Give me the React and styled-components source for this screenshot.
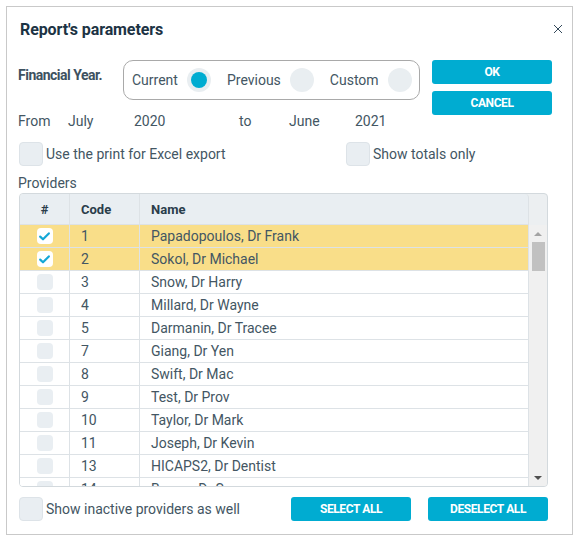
import React from "react";
import styled, { createGlobalStyle } from "styled-components";

const GlobalStyle = createGlobalStyle`
  html, body {
    margin: 0;
    padding: 0;
    background: #ffffff;
  }
  body {
    font-family: Roboto, "Liberation Sans", sans-serif;
    color: #435663;
  }
`;

const Dialog = styled.div`
  margin: 6px 0 0 6px;
  width: 567px;
  height: 529px;
  box-sizing: border-box;
  border: 1px solid #c9c9c9;
  background: #fff;
  padding: 0 20px 0 11px;
  display: flex;
  flex-direction: column;
`;

const Header = styled.div`
  height: 44px;
  display: flex;
  align-items: center;
  justify-content: space-between;
  padding-left: 2px;
`;

const Title = styled.h1`
  margin: 0;
  font-size: 16px;
  font-weight: 700;
  color: #1c3344;
  letter-spacing: -0.1px;
`;

const Close = styled.button`
  border: none;
  background: none;
  padding: 0;
  margin-right: -14px;
  width: 16px;
  height: 16px;
  display: flex;
  align-items: center;
  justify-content: center;
  cursor: pointer;
`;

const TopSection = styled.div`
  margin-top: 9px;
  display: flex;
  justify-content: space-between;
`;

const LeftCol = styled.div`
  display: flex;
  flex-direction: column;
`;

const YearRow = styled.div`
  display: flex;
  align-items: flex-start;
`;

const YearLabel = styled.div`
  width: 105px;
  font-size: 14px;
  font-weight: 700;
  letter-spacing: -0.5px;
  color: #3d5160;
  padding-top: 7px;
`;

const RadioGroup = styled.div`
  width: 297px;
  height: 40px;
  box-sizing: border-box;
  border: 1px solid #a9a9a9;
  border-radius: 10px;
  display: flex;
  align-items: center;
  gap: 16px;
  padding: 0 9px 0 8px;
`;

const RadioOption = styled.label`
  display: flex;
  align-items: center;
  gap: 9px;
  font-size: 14px;
  color: #435663;
`;

const RadioCircle = styled.span`
  width: 24px;
  height: 24px;
  border-radius: 50%;
  background: #e9eef1;
  display: flex;
  align-items: center;
  justify-content: center;

  &::after {
    content: "";
    width: 16px;
    height: 16px;
    border-radius: 50%;
    background: ${(p) => (p.$checked ? "#00acd1" : "transparent")};
  }
`;

const FromRow = styled.div`
  margin-top: 12px;
  height: 18px;
  display: flex;
  align-items: center;
  font-size: 14px;
`;

const FromCell = styled.span`
  width: ${(p) => p.$w}px;
`;

const ButtonCol = styled.div`
  display: flex;
  flex-direction: column;
  gap: 7px;
`;

const Button = styled.button`
  width: 120px;
  height: 24px;
  border: none;
  border-radius: 3px;
  background: #00acd1;
  color: #fff;
  font-family: Roboto, "Liberation Sans", sans-serif;
  font-size: 12px;
  font-weight: 700;
  letter-spacing: -0.4px;
  cursor: pointer;
  padding: 0;
`;

const CheckRow = styled.div`
  margin-top: 12px;
  height: 24px;
  display: flex;
  align-items: center;
  padding-left: 1px;
`;

const CheckItem = styled.label`
  display: flex;
  align-items: center;
  gap: 3px;
  font-size: 14px;
  color: #435663;
  width: ${(p) => (p.$w ? `${p.$w}px` : "auto")};
`;

const BigBox = styled.span`
  width: 24px;
  height: 24px;
  box-sizing: border-box;
  border: 1px solid #dde3e8;
  border-radius: 4px;
  background: #e9eef2;
`;

const SectionLabel = styled.div`
  margin-top: 8px;
  height: 18px;
  display: flex;
  align-items: center;
  font-size: 14px;
`;

const Table = styled.div`
  margin: 1px 0 0 1px;
  width: 529px;
  height: 294px;
  box-sizing: border-box;
  border: 1px solid #d3d9dd;
  border-radius: 4px;
  display: flex;
  flex-direction: column;
  overflow: hidden;
  background: #eceff1;
`;

const HeadRow = styled.div`
  height: 30px;
  display: flex;
  background: #e9eef2;
  border-bottom: 1px solid #dde2e6;
  margin-right: 18px;
  border-right: 1px solid #dde2e6;
  border-top-right-radius: 4px;
`;

const HeadCell = styled.div`
  width: ${(p) => (p.$w ? `${p.$w}px` : "auto")};
  flex: ${(p) => (p.$w ? "none" : 1)};
  box-sizing: border-box;
  display: flex;
  align-items: center;
  justify-content: ${(p) => (p.$center ? "center" : "flex-start")};
  padding-left: ${(p) => (p.$center ? 0 : 11)}px;
  font-size: 13px;
  font-weight: 700;
  color: #2a3d4b;
  border-right: ${(p) => (p.$last ? "none" : "1px solid #dde2e6")};
`;

const BodyWrap = styled.div`
  flex: 1;
  display: flex;
  min-height: 0;
`;

const Rows = styled.div`
  flex: 1;
  overflow: hidden;
  background: #fff;
  border-right: 1px solid #dde2e6;
`;

const Row = styled.div`
  height: 22px;
  display: flex;
  border-bottom: 1px solid #dde2e6;
  background: ${(p) => (p.$selected ? "#f9de89" : "#fff")};
`;

const Cell = styled.div`
  width: ${(p) => (p.$w ? `${p.$w}px` : "auto")};
  flex: ${(p) => (p.$w ? "none" : 1)};
  box-sizing: border-box;
  display: flex;
  align-items: center;
  justify-content: ${(p) => (p.$center ? "center" : "flex-start")};
  padding-left: ${(p) => (p.$center ? 0 : 11)}px;
  font-size: 14px;
  color: #435663;
  border-right: ${(p) => (p.$last ? "none" : "1px solid #dde2e6")};
  white-space: nowrap;
`;

const SmallBox = styled.span`
  width: 16px;
  height: 16px;
  border-radius: 4px;
  background: ${(p) => (p.$checked ? "#ffffff" : "#e9eef2")};
  display: flex;
  align-items: center;
  justify-content: center;
`;

const ScrollBar = styled.div`
  width: 18px;
  background: #f0f0f0;
  display: flex;
  flex-direction: column;
  align-items: center;
`;

const Arrow = styled.div`
  height: 17px;
  width: 100%;
  display: flex;
  align-items: center;
  justify-content: center;
`;

const Track = styled.div`
  flex: 1;
  width: 100%;
  display: flex;
  justify-content: center;
`;

const Thumb = styled.div`
  width: 13px;
  height: 29px;
  background: #c1c1c1;
`;

const BottomRow = styled.div`
  margin-top: 10px;
  height: 24px;
  display: flex;
  align-items: center;
  padding-left: 1px;
`;

const BottomButtons = styled.div`
  margin-left: auto;
  margin-right: 4px;
  display: flex;
  gap: 17px;
`;

const providers = [
  { code: 1, name: "Papadopoulos, Dr Frank", selected: true },
  { code: 2, name: "Sokol, Dr Michael", selected: true },
  { code: 3, name: "Snow, Dr Harry" },
  { code: 4, name: "Millard, Dr Wayne" },
  { code: 5, name: "Darmanin, Dr Tracee" },
  { code: 7, name: "Giang, Dr Yen" },
  { code: 8, name: "Swift, Dr Mac" },
  { code: 9, name: "Test, Dr Prov" },
  { code: 10, name: "Taylor, Dr Mark" },
  { code: 11, name: "Joseph, Dr Kevin" },
  { code: 13, name: "HICAPS2, Dr Dentist" },
  { code: 14, name: "Barros, Dr Sean" },
];

function Check() {
  return (
    <svg width="11" height="9" viewBox="0 0 11 9">
      <path d="M1.2 4.6 L4 7.3 L9.8 1.4" fill="none" stroke="#16a8d6" strokeWidth="2.2" strokeLinecap="round" strokeLinejoin="round" />
    </svg>
  );
}

export default function App() {
  return (
    <>
      <GlobalStyle />
      <Dialog>
        <Header>
          <Title>Report's parameters</Title>
          <Close aria-label="close">
            <svg width="10" height="10" viewBox="0 0 10 10">
              <path d="M1 1 L9 9 M9 1 L1 9" stroke="#34495a" strokeWidth="1" />
            </svg>
          </Close>
        </Header>

        <TopSection>
          <LeftCol>
            <YearRow>
              <YearLabel>Financial Year.</YearLabel>
              <RadioGroup>
                <RadioOption>
                  Current <RadioCircle $checked />
                </RadioOption>
                <RadioOption>
                  Previous <RadioCircle />
                </RadioOption>
                <RadioOption>
                  Custom <RadioCircle />
                </RadioOption>
              </RadioGroup>
            </YearRow>
            <FromRow>
              <FromCell $w={50}>From</FromCell>
              <FromCell $w={66}>July</FromCell>
              <FromCell $w={105}>2020</FromCell>
              <FromCell $w={50}>to</FromCell>
              <FromCell $w={66}>June</FromCell>
              <FromCell>2021</FromCell>
            </FromRow>
          </LeftCol>
          <ButtonCol>
            <Button>OK</Button>
            <Button>CANCEL</Button>
          </ButtonCol>
        </TopSection>

        <CheckRow>
          <CheckItem $w={327}>
            <BigBox />
            Use the print for Excel export
          </CheckItem>
          <CheckItem>
            <BigBox />
            Show totals only
          </CheckItem>
        </CheckRow>

        <SectionLabel>Providers</SectionLabel>

        <Table>
          <HeadRow>
            <HeadCell $w={50} $center>#</HeadCell>
            <HeadCell $w={70}>Code</HeadCell>
            <HeadCell $last>Name</HeadCell>
          </HeadRow>
          <BodyWrap>
            <Rows>
              {providers.map((p) => (
                <Row key={p.code} $selected={p.selected}>
                  <Cell $w={50} $center>
                    <SmallBox $checked={p.selected}>{p.selected && <Check />}</SmallBox>
                  </Cell>
                  <Cell $w={70}>{p.code}</Cell>
                  <Cell $last>{p.name}</Cell>
                </Row>
              ))}
            </Rows>
            <ScrollBar>
              <Arrow>
                <svg width="8" height="4" viewBox="0 0 8 4">
                  <path d="M0 4 L4 0 L8 4 Z" fill="#a3a3a3" />
                </svg>
              </Arrow>
              <Track>
                <Thumb />
              </Track>
              <Arrow>
                <svg width="8" height="4" viewBox="0 0 8 4">
                  <path d="M0 0 L8 0 L4 4 Z" fill="#505050" />
                </svg>
              </Arrow>
            </ScrollBar>
          </BodyWrap>
        </Table>

        <BottomRow>
          <CheckItem>
            <BigBox />
            Show inactive providers as well
          </CheckItem>
          <BottomButtons>
            <Button>SELECT ALL</Button>
            <Button>DESELECT ALL</Button>
          </BottomButtons>
        </BottomRow>
      </Dialog>
    </>
  );
}
